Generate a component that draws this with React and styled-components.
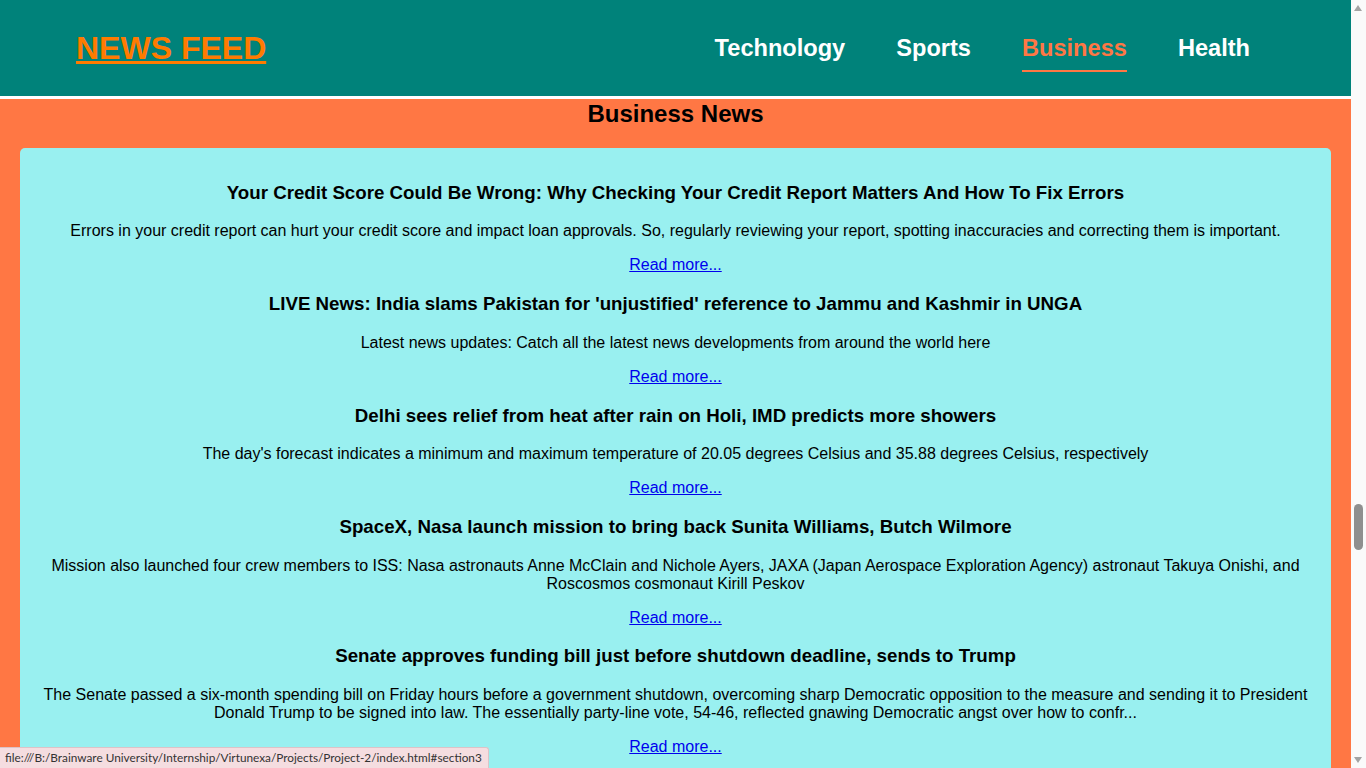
import styled, { createGlobalStyle } from "styled-components"

const GlobalStyle = createGlobalStyle`
  html, body {
    margin: 0;
    padding: 0;
    background-color: #fff;
    font-family: "Liberation Sans", Arial, sans-serif;
  }
  body {
    margin-right: 15px;
  }
`

// header
const Header = styled.header`
  height: 96px;
  background-color: #00827a;
  border-bottom: 3px solid #fff;
  display: flex;
  align-items: center;
  justify-content: space-between;
  padding: 0 101px 0 76px;
`
const Logo = styled.a`
  font-size: 32px;
  font-weight: bold;
  color: #ff7b00;
  text-decoration: underline;
  cursor: pointer;
`
const Nav = styled.nav`
  display: flex;
  gap: 51px;
  margin-top: 11px;
`
const NavItem = styled.a`
  font-size: 23.6px;
  font-weight: bold;
  color: ${(p) => (p.$active ? "#ff7744" : "#fff")};
  text-decoration: none;
  padding-bottom: 8px;
  border-bottom: 2px solid ${(p) => (p.$active ? "#ff7744" : "transparent")};
  cursor: pointer;
`

// section
const Section = styled.section`
  background-color: #ff7744;
  padding: 1px 20px 20px;
`
const SectionTitle = styled.h2`
  font-size: 24px;
  margin: 0 0 20px;
  text-align: center;
  color: #000;
`
const Card = styled.div`
  background-color: #99f0f0;
  border-radius: 5px;
  padding: 15px 20px;
  text-align: center;
`
const Article = styled.div``
const ArticleTitle = styled.h3`
  font-size: 18.72px;
  margin: 18.72px 0;
  color: #000;
`
const Desc = styled.p`
  font-size: 16px;
  margin: 16px 0;
  color: #000;
`
const ReadMore = styled.a`
  color: #0000ee;
  text-decoration: underline;
  cursor: pointer;
`

// browser chrome seen in the shot: link preview and scrollbar
const StatusBar = styled.div`
  position: fixed;
  left: 0;
  bottom: 0;
  height: 20px;
  line-height: 20px;
  padding: 0 6px 0 5px;
  background-color: #f5dde0;
  border: 1px solid #dcc3c7;
  border-left: none;
  border-bottom: none;
  border-top-right-radius: 3px;
  font-family: Lato, "Open Sans", sans-serif;
  font-size: 11.8px;
  color: #333;
`
const ScrollTrack = styled.div`
  position: fixed;
  top: 0;
  right: 0;
  bottom: 0;
  width: 15px;
  background-color: #fafafa;
`
const Arrow = styled.div`
  position: absolute;
  left: 3px;
  width: 0;
  height: 0;
  border-left: 4px solid transparent;
  border-right: 4px solid transparent;
  ${(p) =>
    p.$up
      ? "top: 5px; border-bottom: 6px solid #a3a3a3;"
      : "bottom: 5px; border-top: 6px solid #a3a3a3;"}
`
const Thumb = styled.div`
  position: absolute;
  left: 3px;
  top: 504px;
  width: 9px;
  height: 46px;
  border-radius: 5px;
  background-color: #8f8f8f;
`

const news = [
  {
    title: "Your Credit Score Could Be Wrong: Why Checking Your Credit Report Matters And How To Fix Errors",
    desc: "Errors in your credit report can hurt your credit score and impact loan approvals. So, regularly reviewing your report, spotting inaccuracies and correcting them is important.",
  },
  {
    title: "LIVE News: India slams Pakistan for 'unjustified' reference to Jammu and Kashmir in UNGA",
    desc: "Latest news updates: Catch all the latest news developments from around the world here",
  },
  {
    title: "Delhi sees relief from heat after rain on Holi, IMD predicts more showers",
    desc: "The day's forecast indicates a minimum and maximum temperature of 20.05 degrees Celsius and 35.88 degrees Celsius, respectively",
  },
  {
    title: "SpaceX, Nasa launch mission to bring back Sunita Williams, Butch Wilmore",
    desc: "Mission also launched four crew members to ISS: Nasa astronauts Anne McClain and Nichole Ayers, JAXA (Japan Aerospace Exploration Agency) astronaut Takuya Onishi, and Roscosmos cosmonaut Kirill Peskov",
  },
  {
    title: "Senate approves funding bill just before shutdown deadline, sends to Trump",
    desc: "The Senate passed a six-month spending bill on Friday hours before a government shutdown, overcoming sharp Democratic opposition to the measure and sending it to President Donald Trump to be signed into law. The essentially party-line vote, 54-46, reflected gnawing Democratic angst over how to confr...",
  },
]

export default function App() {
  return (
    <>
      <GlobalStyle />
      <Header>
        <Logo>NEWS FEED</Logo>
        <Nav>
          <NavItem>Technology</NavItem>
          <NavItem>Sports</NavItem>
          <NavItem $active>Business</NavItem>
          <NavItem>Health</NavItem>
        </Nav>
      </Header>
      <Section id="section3">
        <SectionTitle>Business News</SectionTitle>
        <Card>
          {news.map((item) => (
            <Article key={item.title}>
              <ArticleTitle>{item.title}</ArticleTitle>
              <Desc>{item.desc}</Desc>
              <Desc>
                <ReadMore>Read more...</ReadMore>
              </Desc>
            </Article>
          ))}
        </Card>
      </Section>
      <StatusBar>file:///B:/Brainware University/Internship/Virtunexa/Projects/Project-2/index.html#section3</StatusBar>
      <ScrollTrack>
        <Arrow $up />
        <Thumb />
        <Arrow />
      </ScrollTrack>
    </>
  )
}
